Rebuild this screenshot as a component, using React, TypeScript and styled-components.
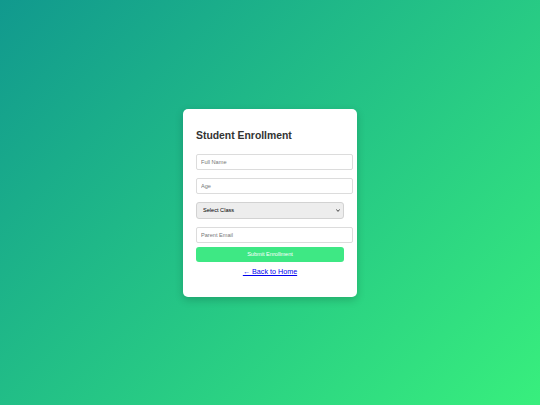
import React from "react";
import styled, { createGlobalStyle } from "styled-components";

const Global = createGlobalStyle`
  html, body { margin: 0; padding: 0; height: 100%; }
  body {
    font-family: "Liberation Sans", Arial, sans-serif;
    background: linear-gradient(135deg, #11998e, #38ef7d);
    min-height: 405px;
  }
  #root { height: 100%; }
`;

const Page = styled.div`
  min-height: 405px;
  display: flex;
  align-items: center;
  justify-content: center;
`;

const Card = styled.div`
  width: 174px;
  box-sizing: border-box;
  background: #fff;
  border-radius: 5px;
  padding: 13px 13px 12px;
  box-shadow: 0 3px 8px rgba(0, 0, 0, 0.18);
`;

const Title = styled.h2`
  margin: 8px 0 12px;
  font-size: 10.4px;
  line-height: 12px;
  font-weight: bold;
  color: #333;
`;

const Form = styled.form`
  display: flex;
  flex-direction: column;
  align-items: flex-start;
`;

const Input = styled.input<{ $gap?: number }>`
  width: 147px;
  box-sizing: content-box;
  padding: 4px;
  height: 6px;
  border: 1px solid #dcdcdc;
  border-radius: 2px;
  font-family: "Liberation Sans", Arial, sans-serif;
  font-size: 5.6px;
  margin: 0 0 ${(p) => p.$gap ?? 8}px;
  outline: none;
  &::placeholder { color: #777; }
`;

const SelectWrap = styled.div`
  position: relative;
  width: 148px;
  margin: 0 0 8px;
`;

const Select = styled.select`
  appearance: none;
  -webkit-appearance: none;
  display: block;
  width: 148px;
  height: 17px;
  box-sizing: border-box;
  padding: 0 6px;
  border: 1px solid #d2d2d2;
  border-radius: 3px;
  background-color: #ededed;
  font-family: "Liberation Sans", Arial, sans-serif;
  font-size: 5.6px;
  color: #000;
  margin: 0;
`;

const Chevron = styled.svg`
  position: absolute;
  right: 4px;
  top: 7px;
  width: 4px;
  height: 3px;
  pointer-events: none;
`;

const Button = styled.button`
  width: 148px;
  height: 15px;
  border: none;
  border-radius: 3px;
  background: #3ee884;
  color: #fff;
  font-family: "Liberation Sans", Arial, sans-serif;
  font-size: 5.6px;
  font-weight: 400;
  padding: 0;
  cursor: pointer;
`;

const LinkRow = styled.p`
  margin: 5px 0 9px;
  text-align: center;
  font-size: 7.2px;
  line-height: 9px;
`;

const BackLink = styled.a`
  color: #0000ee;
  text-decoration: underline;
`;

export default function App() {
  return (
    <>
      <Global />
      <Page>
        <Card>
          <Title>Student Enrollment</Title>
          <Form onSubmit={(e) => e.preventDefault()}>
            <Input placeholder="Full Name" />
            <Input placeholder="Age" />
            <SelectWrap>
              <Select defaultValue="">
                <option value="">Select Class</option>
                <option>Class 1</option>
                <option>Class 2</option>
              </Select>
              <Chevron viewBox="0 0 4 3">
                <path d="M0.3 0.4 L2 2.4 L3.7 0.4" fill="none" stroke="#333" strokeWidth="0.9" />
              </Chevron>
            </SelectWrap>
            <Input placeholder="Parent Email" $gap={4} />
            <Button type="submit">Submit Enrollment</Button>
          </Form>
          <LinkRow>
            <BackLink href="#">← Back to Home</BackLink>
          </LinkRow>
        </Card>
      </Page>
    </>
  );
}
